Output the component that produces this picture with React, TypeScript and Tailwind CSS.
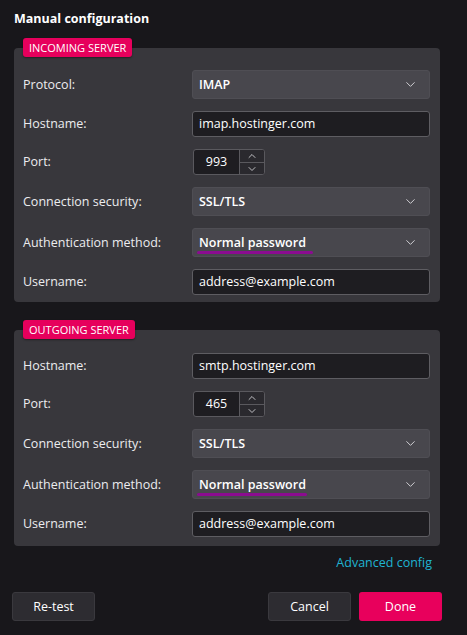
import { ChevronDown, ChevronUp } from 'lucide-react'

type Row =
  | { kind: 'select'; label: string; value: string; mark?: number }
  | { kind: 'input'; label: string; value: string }
  | { kind: 'port'; label: string; value: string }

const INCOMING: Row[] = [
  { kind: 'select', label: 'Protocol:', value: 'IMAP' },
  { kind: 'input', label: 'Hostname:', value: 'imap.hostinger.com' },
  { kind: 'port', label: 'Port:', value: '993' },
  { kind: 'select', label: 'Connection security:', value: 'SSL/TLS' },
  { kind: 'select', label: 'Authentication method:', value: 'Normal password', mark: 116 },
  { kind: 'input', label: 'Username:', value: 'address@example.com' },
]

const OUTGOING: Row[] = [
  { kind: 'input', label: 'Hostname:', value: 'smtp.hostinger.com' },
  { kind: 'port', label: 'Port:', value: '465' },
  { kind: 'select', label: 'Connection security:', value: 'SSL/TLS' },
  { kind: 'select', label: 'Authentication method:', value: 'Normal password', mark: 110 },
  { kind: 'input', label: 'Username:', value: 'address@example.com' },
]

function Control({ row }: { row: Row }) {
  if (row.kind === 'select') {
    return (
      <div className="relative flex h-[29px] w-[238px] items-center justify-between rounded-[3px] border border-[#4f4e54] bg-[#48474d] pl-[6px] pr-[11px]">
        <span className="font-semibold text-white">{row.value}</span>
        <ChevronDown size={15} strokeWidth={1.6} className="text-[#d0d0d4]" />
        {row.mark && (
          <div
            className="absolute bottom-[2px] left-[4px] h-[3px] rounded-full bg-[#8b0c90]"
            style={{ width: row.mark }}
          />
        )}
      </div>
    )
  }
  if (row.kind === 'port') {
    return (
      <div className="ml-[1px] flex h-[26px] w-[72px] overflow-hidden rounded-[3px] border border-[#5a595e] bg-[#1e1d21]">
        <div className="flex w-[46px] items-center justify-center border-r border-[#5a595e] text-white">{row.value}</div>
        <div className="flex flex-1 flex-col bg-[#2a292e]">
          <div className="flex flex-1 items-center justify-center border-b border-[#5a595e]">
            <ChevronUp size={12} strokeWidth={1.8} className="text-[#d0d0d4]" />
          </div>
          <div className="flex flex-1 items-center justify-center">
            <ChevronDown size={12} strokeWidth={1.8} className="text-[#d0d0d4]" />
          </div>
        </div>
      </div>
    )
  }
  return (
    <div className="flex h-[26px] w-[238px] items-center rounded-[3px] border border-[#5e5d62] bg-[#1e1d21] px-[6px] text-white">
      {row.value}
    </div>
  )
}

function Section({ title, rows, top, bottom }: { title: string; rows: Row[]; top: string; bottom: string }) {
  return (
    <div className="flex flex-col">
      <div className="relative z-10 ml-[9px] self-start rounded-[3px] bg-[#e6005c] px-[6px] py-[1px] text-[11px] leading-[17px] text-white shadow-[0_1px_2px_rgba(0,0,0,0.4)]">
        {title}
      </div>
      <div className={'-mt-[9px] flex flex-col gap-[12px] rounded-[4px] bg-[#38373c] pl-[9px] pr-[10px] ' + top + ' ' + bottom}>
        {rows.map(function (row, i) {
          return (
            <div key={i} className="flex items-center">
              <span className="w-[169px] text-[#ececef]">{row.label}</span>
              <div className="flex w-[238px]">
                <Control row={row} />
              </div>
            </div>
          )
        })}
      </div>
    </div>
  )
}

export default function App() {
  return (
    <div
      className="flex h-[635px] w-[467px] flex-col bg-[#18171b] px-[14px] pt-[9px] text-[12.5px] leading-[18px] text-white"
      style={{ fontFamily: '"Open Sans", "Noto Sans", sans-serif' }}
    >
      <h1 className="text-[12.5px] font-bold leading-[20px]">Manual configuration</h1>
      <div className="mt-[9px] w-[426px]">
        <Section title="INCOMING SERVER" rows={INCOMING} top="pt-[22px]" bottom="pb-[7px]" />
      </div>
      <div className="mt-[18px] w-[426px]">
        <Section title="OUTGOING SERVER" rows={OUTGOING} top="pt-[23px]" bottom="pb-[9px]" />
      </div>
      <div className="mt-[8px] flex w-[418px] justify-end">
        <span className="text-[#1fb4d2]">Advanced config</span>
      </div>
      <div className="mt-[20px] -ml-[2px] flex w-[430px] items-center justify-between">
        <button className="h-[29px] w-[83px] rounded-[3px] border border-[#3a393e] bg-[#2d2c31] text-white">Re-test</button>
        <div className="flex gap-[8px]">
          <button className="h-[29px] w-[83px] rounded-[3px] border border-[#3a393e] bg-[#2d2c31] text-white">Cancel</button>
          <button className="h-[29px] w-[83px] rounded-[3px] bg-[#e8005c] text-white">Done</button>
        </div>
      </div>
    </div>
  )
}
